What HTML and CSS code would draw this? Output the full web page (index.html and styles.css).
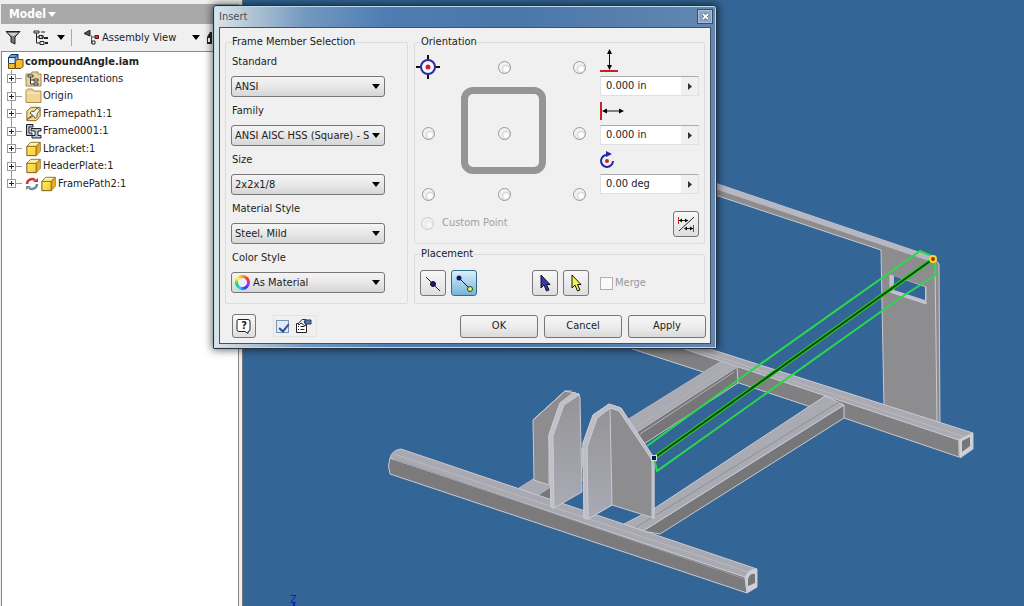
FILE: index.html
```html
<!DOCTYPE html>
<html lang="en">
<head>
<meta charset="utf-8">
<title>compoundAngle.iam</title>
<link rel="stylesheet" href="styles.css">
</head>
<body>
<svg class="defs" aria-hidden="true">
  <defs>
    <linearGradient id="gold" x1="0" y1="0" x2="1" y2="1"><stop offset="0" stop-color="#ffee66"/><stop offset="1" stop-color="#f7c62c"/></linearGradient>
    <linearGradient id="plate" x1="0" y1="0" x2="0" y2="1"><stop offset="0" stop-color="#949497"/><stop offset="1" stop-color="#aaaab5"/></linearGradient>
    <symbol id="part" viewBox="0 0 18 18">
      <path d="M1.500 6 6 1.500H16.500V11.500L12 16.500H1.500Z" fill="url(#gold)" stroke="#6a4d12"/>
      <path d="M2 6 6 2h10l-4 4Z" fill="#fff3a3"/><path d="M12 6 16.500 1.500V11.500L12 16.500Z" fill="#e5aa22"/>
      <path d="M1.500 6H12V16.500M12 6l4.500-4.500" fill="none" stroke="#7b5a16"/>
    </symbol>
    <symbol id="arrow" viewBox="0 0 8 5"><path d="M0 0H8L4 5Z"/></symbol>
    <symbol id="pointer" viewBox="0 0 14 20"><path d="M3 2V15L6 12 8.500 18 11 17 8.500 11.500H12Z" stroke="#111"/></symbol>
  </defs>
</svg>
<main class="app">
  <aside class="browser">
    <header class="panel-title"><button type="button">Model <svg width="8" height="5"><use href="#arrow"/></svg></button></header>
    <div class="toolbar">
      <button type="button" aria-label="Filter"><svg width="16" height="15" viewBox="0 0 16 15"><path d="M1 1.500H15L10 7V14L6 12V7Z" fill="#777" stroke="#222"/><path d="M3 3h10L9 6H7Z" fill="#ccc"/></svg></button>
      <button type="button" class="tree-button" aria-label="Tree options"><svg width="16" height="15" viewBox="0 0 16 15"><path d="M1 1h5v2H1zM8 2h4M3.500 3v10M3.500 7H7M8 7h3M3.500 13H7" fill="none" stroke="#222"/><path d="M6 5.500h4v3H6zM7 11.500h4v3H7z" fill="none" stroke="#222"/><path d="M11 8h4M12 13h3" stroke="#222" stroke-width="2"/></svg><svg class="caret" width="8" height="5"><use href="#arrow"/></svg></button>
      <span class="separator"></span>
      <button type="button" class="view-button"><svg width="16" height="15" viewBox="0 0 16 15"><path d="M6 0 0 3.500 6 6Z" fill="#555" stroke="#222"/><path d="M7.500 5.500v8H11M8 7h3" fill="none" stroke="#555"/><path d="M11 5.500h3.500v3H11z" fill="#e33" stroke="#611"/><path d="M8 11h3v3H8z" fill="#fff" stroke="#222"/></svg><span>Assembly View</span><svg class="caret" width="8" height="5"><use href="#arrow"/></svg></button>
      <button type="button" aria-label="Find"><svg width="12" height="14" viewBox="0 0 12 14"><path d="M1 6 4 1h2v12H1zM7 5h4v8H7z" fill="#222"/><path d="M2 7h2v4H2z" fill="#fff"/></svg></button>
    </div>
    <div class="tree">
      <div class="root"><svg width="17" height="16" viewBox="0 0 17 16"><path d="M1.500 3.500 4 .5h7v6l-2 3H1.500Z" fill="#6b9dd9" stroke="#15345f"/><path d="M1.500 3.500H8v6M8 3.500 11 .5" fill="none" stroke="#15345f"/><path d="M2 4h5.500v5H2z" fill="#dce9f8"/><path d="M1.500 9.500H8v5H1.500zM8.500 7.500 10 5.500h6v7l-2 2H8.500Z" fill="#f5bb2a" stroke="#6a4d12"/></svg><strong>compoundAngle.iam</strong></div>
      <ul>
        <li><button type="button" aria-label="Expand"></button><svg width="17" height="16" viewBox="0 0 17 16"><path d="M1 3h5l1-2h6v2h3v12H1Z" fill="#ead29c" stroke="#a18652"/><path d="M3 4h5v2H3zM5.500 6v7H9M5.500 9H9M9 8h4v2H9zM9 12h4v2H9z" fill="#fff" stroke="#333"/></svg><span>Representations</span></li>
        <li><button type="button" aria-label="Expand"></button><svg width="17" height="16" viewBox="0 0 17 16"><path d="M1 2.500 2.500 1h5L9 3h7v11.500H1Z" fill="#efd694" stroke="#ad8f50"/><path d="M2 5h13" stroke="#fff0bd"/></svg><span>Origin</span></li>
        <li><button type="button" aria-label="Expand"></button><svg width="17" height="16" viewBox="0 0 18 18"><path d="M1.500 6 6 1.500H16.500V11.500L12 16.500H1.500Z" fill="#f8dc83" stroke="#7b5a16"/><path d="M2 15 8 10 5 8 7 6h3l3-4 3 3-3 4v3l-2 2-2-3Z" fill="#f4f4f4" stroke="#444"/></svg><span>Framepath1:1</span></li>
        <li><button type="button" aria-label="Expand"></button><svg width="17" height="16" viewBox="0 0 17 16"><path d="M8 1.500H1.500V12.500H7V10H4V4H8ZM6 5.500h10V8h-3v4.500h3V15H7v-2.500h3V8H6Z" fill="#aec4dc" stroke="#222"/></svg><span>Frame0001:1</span></li>
        <li><button type="button" aria-label="Expand"></button><svg width="17" height="16"><use href="#part"/></svg><span>Lbracket:1</span></li>
        <li><button type="button" aria-label="Expand"></button><svg width="17" height="16"><use href="#part"/></svg><span>HeaderPlate:1</span></li>
        <li><button type="button" aria-label="Expand"></button><svg width="14" height="14" viewBox="0 0 14 14"><path d="M2 7A5 5 0 0 1 10 3" fill="none" stroke="#cf3436" stroke-width="2.500"/><path d="M8 5h5V1Z" fill="#cf3436"/><path d="M12 7A5 5 0 0 1 4 11" fill="none" stroke="#6b8f9d" stroke-width="2.500"/><path d="M6 9H1v4Z" fill="#6b8f9d"/></svg><svg width="17" height="16"><use href="#part"/></svg><span>FramePath2:1</span></li>
      </ul>
    </div>
  </aside>
  <section class="viewport" aria-label="Model view">
    <svg viewBox="243 0 781 606" preserveAspectRatio="xMinYMin slice">
      <g stroke="#c9c9d2" stroke-linejoin="round">
        <path d="M700 178 933 257 939 264 940 426 884 408 881 250 700 190Z" fill="#8d8d90"/>
        <path d="M700 178 933 257 935 263 700 184Z" fill="#b7b7c1" stroke="none"/>
        <path d="M935 262 937 425" fill="none"/>
        <path d="M890 275 926 287V304L890 292Z" fill="#c0c0cb"/><path d="M894 276 925 287V300L894 290Z" fill="#336596" stroke="none"/>
        <path d="M620 345 690 346 959 440V457L844 418 736 382 703 372Z" fill="#808083"/>
        <path d="M660 333 973 433 959 440 660 341Z" fill="#aaaab2"/>
        <path d="M660 338 965 437" fill="none" stroke="#b9b9c1"/>
        <path d="M959 440 973 433V449L960 458Z" fill="#d0d0d8"/><path d="M962 441 970 437V446L962 452Z" fill="#77777a" stroke="none"/>
        <path d="M737 367 738 383 647 442 540 505 535 490 640 430Z" fill="#77777a"/>
        <path d="M720 362 737 367 640 430 535 497 519 488 630 418Z" fill="#aaaab2" stroke="#b5b5be"/>
        <path d="M732 365 638 426M734 372 640 434" fill="none" stroke="#b3b3ba"/>
        <path d="M844 405V418L660 534 643 531Z" fill="#77777a"/>
        <path d="M825 396 844 405 643 531 624 524 655 508Z" fill="#aaaab2"/>
        <path d="M839 402 635 528" fill="none" stroke="#8f8f96"/>
        <path d="M390 458 745 577 747 593 390 474Q387 466 390 458Z" fill="#7b7b7e"/>
        <path d="M390 458Q392 450 401 449L757 569 745 577Z" fill="#a9a9b1"/>
        <path d="M394 454 751 573" fill="none" stroke="#b9b9c1"/>
        <path d="M394 459 745 579" fill="none" stroke="#97979d"/>
        <path d="M745 577Q750 568 757 569V587L747 593Z" fill="#d0d0d8"/><path d="M748 579Q750 573 755 574V583L748 586Z" fill="#77777a" stroke="none"/>
        <path d="M533 420 565 391 579 394 560 403 549 435V485L534 480Z" fill="#8d8d90"/>
        <path d="M549 435 560 403 579 394 580 398 582 492 554 508 551 507Z" fill="url(#plate)"/>
        <path d="M549 435 560 403 574 392 579 395 564 405 553 436 554 508 551 507Z" fill="#c0c0c7"/>
        <path d="M533 420 565 391 572 391" fill="none"/>
        <path d="M583 443 593 415 609 404 621 408 654 458V518L612 505 588 519 584 518Z" fill="#8d8d90"/>
        <path d="M587 447 597 418 610 408 612 505 588 519Z" fill="url(#plate)"/>
        <path d="M583 443 593 415 609 404 621 408 654 458V518H652V460L619 411 610 408 597 418 587 447 588 519 584 518Z" fill="#bdbdc5"/>
      </g>
      <g fill="none" stroke="#29d94b" stroke-width="2">
        <path d="M647 446 738 380 920 251 934 257 936 275 903 296 657 471 654 458"/>
        <path d="M933 259 654 458" stroke-width="4" stroke="#31c928"/><path d="M933 259 654 458" stroke="#034d08" stroke-width="2"/>
      </g>
      <circle cx="933" cy="259" r="3" fill="#a43118" stroke="#ffd72c" stroke-width="2"/><path d="M651 455h6v6h-6z" fill="#d5dce4"/><path d="M652 456h4v4h-4z" fill="#071854"/>
      <text x="290" y="603">Z</text><path d="M294 603v3" stroke="#1020b5" stroke-width="2"/>
    </svg>
  </section>
</main>

<form class="dialog" role="dialog" aria-labelledby="dialog-title">
  <header class="titlebar"><span id="dialog-title">Insert</span><button type="button" aria-label="Close"><svg width="7" height="7" viewBox="0 0 7 7"><path d="M1 1l5 5M6 1 1 6" stroke="#35475e" stroke-width="3"/><path d="M1 1l5 5M6 1 1 6" stroke="#fff" stroke-width="2"/></svg></button></header>
  <div class="client">
    <div class="groups">
      <fieldset class="member"><legend>Frame Member Selection</legend>
        <div class="field"><label for="standard">Standard</label><div class="combo"><select id="standard"><option>ANSI</option></select><svg width="8" height="5"><use href="#arrow"/></svg></div></div>
        <div class="field"><label for="family">Family</label><div class="combo"><select id="family"><option>ANSI AISC HSS (Square) - S</option></select><svg width="8" height="5"><use href="#arrow"/></svg></div></div>
        <div class="field"><label for="size">Size</label><div class="combo"><select id="size"><option>2x2x1/8</option></select><svg width="8" height="5"><use href="#arrow"/></svg></div></div>
        <div class="field"><label for="material">Material Style</label><div class="combo"><select id="material"><option>Steel, Mild</option></select><svg width="8" height="5"><use href="#arrow"/></svg></div></div>
        <div class="field"><label for="color">Color Style</label><div class="combo color"><i class="wheel"></i><select id="color"><option>As Material</option></select><svg width="8" height="5"><use href="#arrow"/></svg></div></div>
      </fieldset>
      <div class="right">
        <fieldset class="orientation"><legend>Orientation</legend>
          <div class="anchors">
            <span class="profile"></span>
            <label class="target"><input type="radio" name="anchor" checked aria-label="Top left"><svg width="24" height="24" viewBox="0 0 24 24"><path d="M12 0v5M12 19v5M0 12h5M19 12h5" stroke="#111" stroke-width="2"/><circle cx="12" cy="12" r="7" fill="#f7f7ff" stroke="#2d2aa8" stroke-width="2"/><circle cx="12" cy="12" r="2.500" fill="#c22825"/></svg></label>
            <input class="r1 c2" type="radio" name="anchor" aria-label="Top centre"><input class="r1 c3" type="radio" name="anchor" aria-label="Top right">
            <input class="r2 c1" type="radio" name="anchor" aria-label="Middle left"><input class="r2 c2" type="radio" name="anchor" aria-label="Centre"><input class="r2 c3" type="radio" name="anchor" aria-label="Middle right">
            <input class="r3 c1" type="radio" name="anchor" aria-label="Bottom left"><input class="r3 c2" type="radio" name="anchor" aria-label="Bottom centre"><input class="r3 c3" type="radio" name="anchor" aria-label="Bottom right">
          </div>
          <div class="offsets">
            <label for="vertical" aria-label="Vertical offset"><svg width="24" height="24" viewBox="0 0 24 24"><path d="M0 19h18" stroke="#c5202d" stroke-width="2"/><path d="M9.500 1v16" stroke="#111"/><path d="M9.500-3 7 2h5ZM9.500 18 7 13h5Z"/></svg></label>
            <div class="spin"><input id="vertical" value="0.000 in"><button type="button" aria-label="Vertical choices"><svg width="4" height="7"><path d="M0 0 4 3.500 0 7Z"/></svg></button></div>
            <label for="horizontal" aria-label="Horizontal offset"><svg width="24" height="24" viewBox="0 0 24 24"><path d="M1 1v18" stroke="#c5202d" stroke-width="2"/><path d="M4 10h18" stroke="#111"/><path d="M2 10 7 7.500v5ZM24 10 19 7.500v5Z"/></svg></label>
            <div class="spin"><input id="horizontal" value="0.000 in"><button type="button" aria-label="Horizontal choices"><svg width="4" height="7"><path d="M0 0 4 3.500 0 7Z"/></svg></button></div>
            <label for="angle" aria-label="Angle"><svg width="24" height="24" viewBox="0 0 24 24"><path d="M8 5A6 6 0 1 0 13 11" fill="none" stroke="#2427a9" stroke-width="2"/><path d="M6 1v6l6-3Z" fill="#2427a9"/><circle cx="7" cy="11" r="2" fill="#c22825"/></svg></label>
            <div class="spin"><input id="angle" value="0.00 deg"><button type="button" aria-label="Angle choices"><svg width="4" height="7"><path d="M0 0 4 3.500 0 7Z"/></svg></button></div>
          </div>
          <label class="custom"><input type="radio" name="anchor" disabled>Custom Point</label>
          <button type="button" class="icon-button flip" aria-label="Align"><svg width="20" height="20" viewBox="0 0 20 20"><path d="M3 17 18 3M3 6.500h9M9 14.500h8" stroke="#222" fill="none"/><path d="M3 6.500 6 4.500v4zM12 6.500 9 4.500v4zM8 14.500l3-2v4zM17 14.500l-3-2v4z"/><path d="M2.500 3v7M17.500 11v7" stroke="#c5202d"/></svg></button>
        </fieldset>
        <fieldset class="placement"><legend>Placement</legend>
          <div class="tools">
            <button type="button" class="icon-button" aria-label="Insert on edge"><svg width="20" height="20" viewBox="0 0 20 20"><path d="M3 4 17 18" stroke="#222"/><circle cx="10" cy="11" r="2.500" fill="#151591" stroke="#111"/></svg></button>
            <button type="button" class="icon-button active" aria-label="Insert between points"><svg width="20" height="20" viewBox="0 0 20 20"><path d="M5 5 15 15" stroke="#111"/><circle cx="5" cy="5" r="2.500" fill="#151566"/><circle cx="16" cy="16" r="2.500" fill="#dcf76b" stroke="#294614"/></svg></button>
            <button type="button" class="icon-button pick" aria-label="Select start"><svg width="14" height="20" fill="#3538bc"><use href="#pointer"/></svg></button>
            <button type="button" class="icon-button" aria-label="Select end"><svg width="14" height="20" fill="#f4f34b"><use href="#pointer"/></svg></button>
            <label class="merge"><input type="checkbox" disabled>Merge</label>
          </div>
        </fieldset>
      </div>
    </div>
    <footer class="actions">
      <button type="button" class="icon-button" aria-label="Help"><svg width="16" height="17" viewBox="0 0 16 17"><path d="M2 1.500h10q2 0 2 2v8q0 2-2 2v2L9 13.500H3q-2 0-2-2V3q0-1 1-1.500Z" fill="#fff" stroke="#222"/></svg><span class="question">?</span></button>
      <label class="prompt"><input type="checkbox" checked aria-label="Prompt for file name"><svg width="17" height="16" viewBox="0 0 17 16"><path d="M1.500 5.500h10v9h-10z" fill="#fff" stroke="#222"/><path d="M3 8.500h1M3 11.500h1M5.500 8.500h4M5.500 11.500h4" stroke="#222"/><path d="M3 6 7 1.500h4L9 4l2 2-1 2-4-3-2 2Z" fill="#eee" stroke="#333"/><path d="M10 2h6v4h-6Z" fill="#5776a8" stroke="#253f68"/></svg></label>
      <div class="commands"><button type="submit">OK</button><button type="button">Cancel</button><button type="button">Apply</button></div>
    </footer>
  </div>
</form>
</body>
</html>
```
FILE: styles.css
```css
* { box-sizing: border-box; }
body { margin: 0; background: #336596; color: #222; font: 11px/14px "DejaVu Sans Condensed", "Noto Sans", sans-serif; }
button, input, select { font: inherit; color: inherit; margin: 0; }
button { padding: 0; border: 0; background: none; }
svg { flex: none; display: block; }
fieldset { margin: 0; padding: 0; border: 0; min-width: 0; }
.defs { position: absolute; width: 0; height: 0; }

.app { display: grid; grid-template-columns: 243px 1fr; min-height: 100vh; }
.browser { display: flex; flex-direction: column; padding: 4px 3px 0 1px; background: #eee; border-right: 1px solid #777; }
.panel-title { height: 20px; background: #a9a9a9; padding: 2px 8px; }
.panel-title button { display: flex; align-items: center; gap: 2px; color: #fff; fill: #fff; font-weight: bold; font-size: 12px; line-height: 16px; }
.toolbar { display: flex; align-items: center; height: 27px; padding-left: 4px; background: #f0f0f0; overflow: hidden; }
.toolbar button { display: flex; align-items: center; }
.toolbar .tree-button { gap: 8px; margin-left: 12px; }
.separator { width: 1px; height: 17px; margin-left: 6px; background: #aaa; }
.toolbar .view-button { gap: 2px; margin-left: 12px; margin-right: 6px; }
.view-button .caret { margin-left: 14px; }
.tree { flex: 1; padding: 1px 0 0 5px; background: #fff; border: 1px solid #888; border-bottom: 0; }
.root { display: flex; align-items: center; gap: 1px; height: 17px; }
.tree ul { display: grid; grid-template-rows: repeat(3, 17px 18px) 17px; margin: 0; padding: 0; list-style: none; background: linear-gradient(#999, #999) 4px 0 / 1px 114px no-repeat; }
.tree li { display: flex; align-items: center; gap: 1px; }
.tree li button { position: relative; width: 9px; height: 9px; margin-right: 8px; border: 1px solid #999; background: linear-gradient(#222, #222) 1px 3px / 5px 1px no-repeat, linear-gradient(#222, #222) 3px 1px / 1px 5px no-repeat, #fff; }
.tree li button::after { content: ""; position: absolute; left: 8px; top: 3px; width: 6px; height: 1px; background: #999; }
.viewport { position: relative; min-width: 0; background: #336596; overflow: hidden; }
.viewport svg { position: absolute; width: 100%; height: 100%; }
.viewport text { fill: #1020b5; font-size: 11px; }

.dialog { position: absolute; left: 213px; top: 5px; width: 504px; padding: 0 5px 4px; border: 1px solid #26323e; border-radius: 3px 3px 1px 1px; background: linear-gradient(90deg, #dfe4e8, #b4c6d6 7%, #7399c0 18%, #4f7db3 34%, #4a76a9 60%, #6288b2); box-shadow: inset 0 0 0 1px #b9dce6, 0 0 8px 1px #0009; }
.titlebar { display: flex; align-items: center; justify-content: space-between; height: 21px; margin-right: -2px; color: #4b5157; }
.titlebar button { display: grid; place-items: center; width: 16px; height: 15px; border: 1px solid #344d70; background: #8ba5c3; box-shadow: inset 0 0 0 1px #a9bfd6; }
.client { padding: 7px 4px 5px 5px; border: 1px solid #435263; background: #f0f0f0; }
.groups { display: grid; grid-template-columns: 183px 291px; gap: 6px; }
legend { padding: 0; margin-left: 6px; height: 14px; }
.member legend { margin-left: 1px; }
.member, .orientation, .placement { border: 1px solid #dcdcdf; border-radius: 2px; }
.member { height: 269px; padding: 6px 22px 0 5px; }
.field { height: 49px; }
.field label { display: block; height: 21px; padding-left: 1px; }
.combo { position: relative; display: flex; align-items: center; height: 21px; border: 1px solid #777; border-radius: 3px; background: linear-gradient(#f5f5f5, #e8e8e8 48%, #d6d6d6); }
.combo select { flex: 1; width: 100%; height: 19px; padding: 0 10px 0 3px; border: 0; outline: 0; appearance: none; background: transparent; }
.combo > svg { position: absolute; right: 4px; }
.wheel { width: 15px; height: 15px; margin-left: 3px; border-radius: 50%; background: radial-gradient(circle, #eef 0 4px, transparent 5px), conic-gradient(#ff9d20, #f33, #a3f, #33f, #1df, #2c5, #ff3, #ff9d20); }
.right { display: flex; flex-direction: column; }
.orientation { display: grid; grid-template-columns: 185px 1fr; grid-template-rows: 151px 36px; height: 209px; padding-top: 6px; }
.anchors { position: relative; display: grid; grid-template-columns: 76px 75px 24px; grid-template-rows: 66px 61px 24px; margin-left: 1px; }
.anchors > input, .custom input { width: 13px; height: 13px; appearance: none; border: 1px solid #989898; border-radius: 50%; background: radial-gradient(circle at 65% 65%, #fff 0 2px, #d8d8d8 4px, #f2f2f2 5px); }
.anchors > input { margin: 6px; }
.r1 { grid-row: 1; }
.r2 { grid-row: 2; }
.r3 { grid-row: 3; }
.c1 { grid-column: 1; }
.c2 { grid-column: 2; }
.c3 { grid-column: 3; }
.target { width: 24px; height: 24px; grid-area: 1 / 1; }
.target input { position: absolute; opacity: 0; }
.profile { grid-area: 1 / 1 / -1 / -1; place-self: center; width: 85px; height: 87px; border: 7px solid #959595; border-radius: 12px; }
.offsets { display: grid; grid-template-columns: 100%; grid-template-rows: 21px 20px 29px 20px 29px 20px; width: 99px; }
.offsets label { display: flex; align-items: end; }
.offsets label svg { overflow: visible; }
.spin { display: flex; background: #fff; border: 1px solid #e1e1e1; border-top-color: #aaa; }
.spin input { flex: 1; min-width: 0; padding: 0 5px; border: 0; background: none; }
.spin button { display: grid; place-items: center; width: 17px; background: #f0f0f0; fill: #333; }
.custom { display: flex; align-items: center; gap: 8px; padding: 0 0 2px 6px; color: #a0a0a0; }
.custom input { opacity: .4; }
.icon-button { display: grid; place-items: center; width: 26px; height: 26px; border: 1px solid #777; border-radius: 3px; background: linear-gradient(#f8f8f8, #dedede); }
.flip { justify-self: end; margin-right: 5px; align-self: center; }
.placement { height: 57px; margin-top: 3px; }
.tools { display: flex; align-items: center; gap: 5px; padding: 9px 5px 0; }
.active { border-color: #316d8a; background: linear-gradient(#d8effb, #76b4d9); }
.pick { margin-left: 50px; }
.merge { display: flex; align-items: center; gap: 2px; margin-left: 6px; color: #999; }
input[type=checkbox] { width: 13px; height: 13px; appearance: none; border: 1px solid #b0b0b0; background: #fafafa; }
.actions { display: flex; align-items: center; height: 34px; padding: 10px 0 0 7px; }
.actions .icon-button { width: 24px; height: 24px; }
.actions .icon-button > * { grid-area: 1 / 1; }
.question { font-weight: bold; }
.prompt { display: flex; align-items: center; gap: 6px; height: 22px; margin-left: 17px; padding: 0 4px 0 2px; border: 1px solid #e3e3e3; }
.prompt input { border-color: #7894b3; background: #e1ebf6; position: relative; }
.prompt input::after { content: ""; position: absolute; left: 4px; top: 1px; width: 4px; height: 8px; border: solid #334f8b; border-width: 0 2px 2px 0; transform: rotate(40deg); }
.commands { display: flex; gap: 6px; margin-left: auto; }
.commands button { width: 78px; height: 23px; border: 1px solid #777; border-radius: 3px; background: linear-gradient(#f6f6f6, #ededed 50%, #dadada); }
```
